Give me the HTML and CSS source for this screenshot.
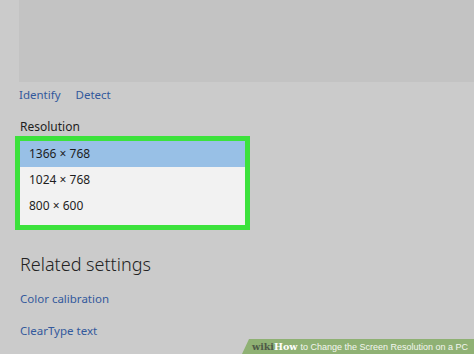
FILE: index.html
```html
<!DOCTYPE html>
<html>
<head>
  <title>Display settings</title>
  <link rel="stylesheet" href="styles.css">
</head>
<body>
  <div class="preview"></div>

  <div class="link-row">
    <a class="link" href="#">Identify</a>
    <a class="link" href="#">Detect</a>
  </div>

  <div class="field-label">Resolution</div>
  <div class="dropdown">
    <div class="option selected">1366 × 768</div>
    <div class="option">1024 × 768</div>
    <div class="option">800 × 600</div>
  </div>

  <h2 class="section-title">Related settings</h2>
  <a class="link block first" href="#">Color calibration</a>
  <a class="link block" href="#">ClearType text</a>

  <div class="banner">
    <span class="logo"><span class="wiki">wiki</span><span class="how">How</span></span>
    <span class="caption">to Change the Screen Resolution on a PC</span>
  </div>
</body>
</html>
```

FILE: styles.css
```css
body {
  margin: 0;
  width: 474px;
  height: 354px;
  overflow: hidden;
  position: relative;
  background-color: #cbcbcb;
  font-family: "Noto Sans", "Open Sans", sans-serif;
  font-size: 12px;
  color: #1e1e1e;
}
.preview {
  height: 82px;
  margin-left: 19px;
  background-color: #c3c3c3;
}
.link-row {
  display: flex;
  gap: 15px;
  margin-top: 5px;
  padding-left: 19px;
  line-height: 16px;
  font-size: 11.5px;
}
.link {
  color: #33599c;
  text-decoration: none;
}
.field-label {
  margin-top: 16px;
  padding-left: 20px;
  line-height: 16px;
}
.dropdown {
  width: 225px;
  margin: 1px 0 0 15px;
  border: 5px solid #3ce23c;
  background-color: #f2f2f2;
  padding-bottom: 6px;
}
.option {
  height: 26px;
  line-height: 26px;
  padding-left: 9px;
}
.selected {
  background-color: #98c0e6;
}
.section-title {
  margin: 22px 0 0 20px;
  font-size: 18px;
  font-weight: 300;
  line-height: 24px;
  color: #222;
}
.block {
  display: block;
  padding-left: 20px;
  line-height: 16px;
  font-size: 11.5px;
}
.first {
  margin-top: 15px;
}
.block + .block {
  margin-top: 16px;
}
.banner {
  position: absolute;
  right: 0;
  bottom: 0;
  width: 232px;
  height: 15px;
  background-color: #8fb174;
  clip-path: polygon(7px 0, 100% 0, 100% 100%, 0 100%);
  display: flex;
  align-items: center;
  gap: 3px;
  padding-left: 10px;
  box-sizing: border-box;
  white-space: nowrap;
}
.logo {
  font-family: "DejaVu Serif", serif;
  font-weight: bold;
  font-size: 9.5px;
}
.wiki {
  color: #4e5a47;
}
.how {
  color: #ffffff;
}
.caption {
  font-family: "Liberation Sans", Arial, sans-serif;
  font-size: 9px;
  color: #f4f7f0;
}
```
